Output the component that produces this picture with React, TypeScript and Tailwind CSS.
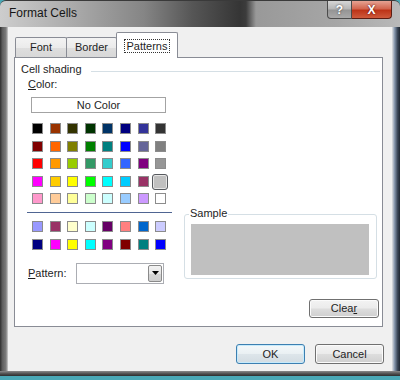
import React from "react";

const mainRows: string[][] = [
  ["bg-[#000000]", "bg-[#993300]", "bg-[#333300]", "bg-[#003300]", "bg-[#003366]", "bg-[#000080]", "bg-[#333399]", "bg-[#333333]"],
  ["bg-[#800000]", "bg-[#ff6600]", "bg-[#808000]", "bg-[#008000]", "bg-[#008080]", "bg-[#0000ff]", "bg-[#666699]", "bg-[#808080]"],
  ["bg-[#ff0000]", "bg-[#ff9900]", "bg-[#99cc00]", "bg-[#339966]", "bg-[#33cccc]", "bg-[#3366ff]", "bg-[#800080]", "bg-[#969696]"],
  ["bg-[#ff00ff]", "bg-[#ffcc00]", "bg-[#ffff00]", "bg-[#00ff00]", "bg-[#00ffff]", "bg-[#00ccff]", "bg-[#993366]", "bg-[#c0c0c0]"],
  ["bg-[#ff99cc]", "bg-[#ffcc99]", "bg-[#ffff99]", "bg-[#ccffcc]", "bg-[#ccffff]", "bg-[#99ccff]", "bg-[#cc99ff]", "bg-[#ffffff]"],
];

const chartRows: string[][] = [
  ["bg-[#9999ff]", "bg-[#993366]", "bg-[#ffffcc]", "bg-[#ccffff]", "bg-[#660066]", "bg-[#ff8080]", "bg-[#0066cc]", "bg-[#ccccff]"],
  ["bg-[#000080]", "bg-[#ff00ff]", "bg-[#ffff00]", "bg-[#00ffff]", "bg-[#800080]", "bg-[#800000]", "bg-[#008080]", "bg-[#0000ff]"],
];

const btn =
  "flex items-center justify-center rounded-[3px] border border-[#707070] bg-[linear-gradient(180deg,#f3f3f3_0%,#ebebeb_48%,#dddddd_52%,#cfcfcf_100%)] shadow-[inset_0_0_0_1px_#fbfbfb] text-[11px] text-[#1e1e1e]";

function Swatch({ cls, selected }: { cls: string; selected?: boolean }) {
  return (
    <div className="relative h-[11px] w-[11px]">
      {selected && (
        <div className="absolute -left-[3px] -top-[2px] h-[16px] w-[16px] rounded-[3px] border border-[#56595e] bg-[#c0c0c0] shadow-[inset_0_0_0_1px_#e6e6e6]" />
      )}
      {!selected && <div className={`h-full w-full border border-[#8c8c8c] ${cls}`} />}
    </div>
  );
}

function Grid({ rows, selected }: { rows: string[][]; selected?: [number, number] }) {
  return (
    <div className="grid grid-cols-[repeat(8,11px)] gap-x-[6.6px] gap-y-[6.5px]">
      {rows.map((row, r) =>
        row.map((c, i) => (
          <Swatch key={`${r}-${i}`} cls={c} selected={!!selected && selected[0] === r && selected[1] === i} />
        ))
      )}
    </div>
  );
}

export default function App() {
  return (
    <div className="flex h-[380px] w-[400px] flex-col overflow-hidden bg-[#4aa8b6] font-['Liberation_Sans',Arial,sans-serif] text-[#1e1e1e]">
      {/* title bar */}
      <div className="flex h-[27px] shrink-0 justify-between rounded-t-[6px] border-t border-[#3a3a3a] bg-[linear-gradient(90deg,#cdcdcd_0%,#ababab_18%,#858585_36%,#565656_48%,#353535_60%,#3c3c3c_61.5%,#999999_64%,#a6a6a6_84%,#b9b9b9_100%)] pl-[9px] pr-[8px]">
        <div className="pt-[5px] text-[12px] leading-[14px] text-[#161616]">Format Cells</div>
        <div className="flex h-[18px] self-start">
          <div className="flex w-[25px] items-center justify-center rounded-bl-[4px] border border-t-0 border-[#4b4b4b] bg-[linear-gradient(180deg,#d6d6d6_0%,#b5b5b5_48%,#949494_52%,#a9a9a9_100%)] text-[12px] font-bold text-white [text-shadow:0_0_2px_#333]">
            ?
          </div>
          <div className="flex w-[40px] items-center justify-center rounded-br-[4px] border border-l-0 border-t-0 border-[#5c1c12] bg-[linear-gradient(180deg,#e6a393_0%,#d2664f_45%,#bd3418_55%,#cf5a3c_100%)] text-[12px] font-bold text-white [text-shadow:0_0_2px_#400]">
            X
          </div>
        </div>
      </div>

      {/* body */}
      <div className="flex h-[344px] shrink-0">
        <div className="w-[8px] bg-[linear-gradient(90deg,#2e2e2e_0%,#5e5e5e_30%,#7c7c7c_75%,#cfcfcf_100%)]" />
        <div className="flex w-[384px] flex-col bg-[#f0f0f0] px-[6px] pt-[5px]">
          {/* tabs */}
          <div className="flex h-[25px] items-end pl-[1px]">
            <div className="flex h-[20px] w-[52px] items-center justify-center rounded-t-[2px] border border-b-0 border-[#898c95] bg-[linear-gradient(180deg,#f3f3f3_0%,#ebebeb_50%,#dedede_51%,#d8d8d8_100%)] text-[11px]">
              Font
            </div>
            <div className="-ml-px flex h-[20px] w-[51px] items-center justify-center rounded-t-[2px] border border-b-0 border-[#898c95] bg-[linear-gradient(180deg,#f3f3f3_0%,#ebebeb_50%,#dedede_51%,#d8d8d8_100%)] text-[11px]">
              Border
            </div>
            <div className="relative z-10 -mb-px -ml-px flex h-[26px] w-[62px] items-start justify-center rounded-t-[2px] border border-b-0 border-[#898c95] bg-white pt-[6px]">
              <span className="border border-dotted border-[#333] px-[2px] text-[11px] leading-[12px]">Patterns</span>
            </div>
          </div>

          {/* panel */}
          <div className="flex h-[270px] w-[369px] flex-col border border-[#898c95] bg-white">
            <div className="ml-[6px] mt-[5px] flex items-start">
              <span className="text-[11px] leading-[13px]">Cell shading</span>
              <div className="ml-[9px] mr-[2px] mt-[8px] h-px flex-1 bg-[#d5dfe5]" />
            </div>

            <div className="flex">
              <div className="ml-[12px] mt-[2px] flex w-[145px] flex-col">
                <div className="pl-[1px] text-[11px] leading-[13px]">
                  <span className="underline">C</span>olor:
                </div>
                <div className="ml-[4px] mt-[6px] flex h-[16px] w-[135px] items-center justify-center border border-[#a3a3a3] bg-white text-[11px]">
                  No Color
                </div>
                <div className="ml-[5px] mt-[10px]">
                  <Grid rows={mainRows} selected={[3, 7]} />
                </div>
                <div className="mt-[8px] h-px w-[145px] bg-[#4f6592]" />
                <div className="ml-[5px] mt-[8px]">
                  <Grid rows={chartRows} />
                </div>
                <div className="mt-[13px] flex h-[21px] items-center pl-[1px]">
                  <span className="w-[48px] text-[11px]">
                    <span className="underline">P</span>attern:
                  </span>
                  <div className="flex h-[21px] w-[88px] border border-[#abadb3] bg-white">
                    <div className="flex-1" />
                    <div className="m-px flex w-[14px] items-center justify-center rounded-[2px] border border-[#8a8a8a] bg-[linear-gradient(180deg,#f2f2f2_0%,#e6e6e6_50%,#d5d5d5_51%,#cfcfcf_100%)]">
                      <svg width="7" height="4" viewBox="0 0 7 4">
                        <path d="M0 0h7L3.5 4z" fill="#000" />
                      </svg>
                    </div>
                  </div>
                </div>
              </div>

              <div className="ml-[12px] mt-[138px] w-[193px]">
                <div className="relative h-[65px] rounded-[3px] border border-[#d5dfe5] pl-[6px] pt-[9px]">
                  <span className="absolute -top-[8px] left-[4px] bg-white px-[1px] text-[11px] leading-[13px]">Sample</span>
                  <div className="h-[51px] w-[178px] bg-[#c0c0c0]" />
                </div>
              </div>
            </div>

            <div className="mb-[8px] mr-[3px] mt-auto flex justify-end">
              <div className={`${btn} h-[19px] w-[70px]`}>
                Clea<span className="underline">r</span>
              </div>
            </div>
          </div>

          {/* dialog buttons */}
          <div className="mt-[17px] flex justify-end gap-[10px] pr-[2px]">
            <div className="flex h-[20px] w-[69px] items-center justify-center rounded-[3px] border border-[#3c7fb1] bg-[linear-gradient(180deg,#f4f8fa_0%,#eaf0f3_48%,#dde5ea_52%,#d3dce2_100%)] shadow-[inset_0_0_0_1px_#c6eafb] text-[11px]">
              OK
            </div>
            <div className={`${btn} h-[20px] w-[69px]`}>Cancel</div>
          </div>
        </div>
        <div className="w-[8px] bg-[linear-gradient(90deg,#e2e2e2_0%,#8b9bb0_30%,#3a4656_70%,#1e2630_100%)]" />
      </div>

      <div className="h-[5px] shrink-0 bg-[linear-gradient(180deg,#8a8a8a_0%,#4b4b4b_60%,#2e2e2e_100%)]" />
      <div className="flex-1 bg-[#4aa8b6]" />
    </div>
  );
}
